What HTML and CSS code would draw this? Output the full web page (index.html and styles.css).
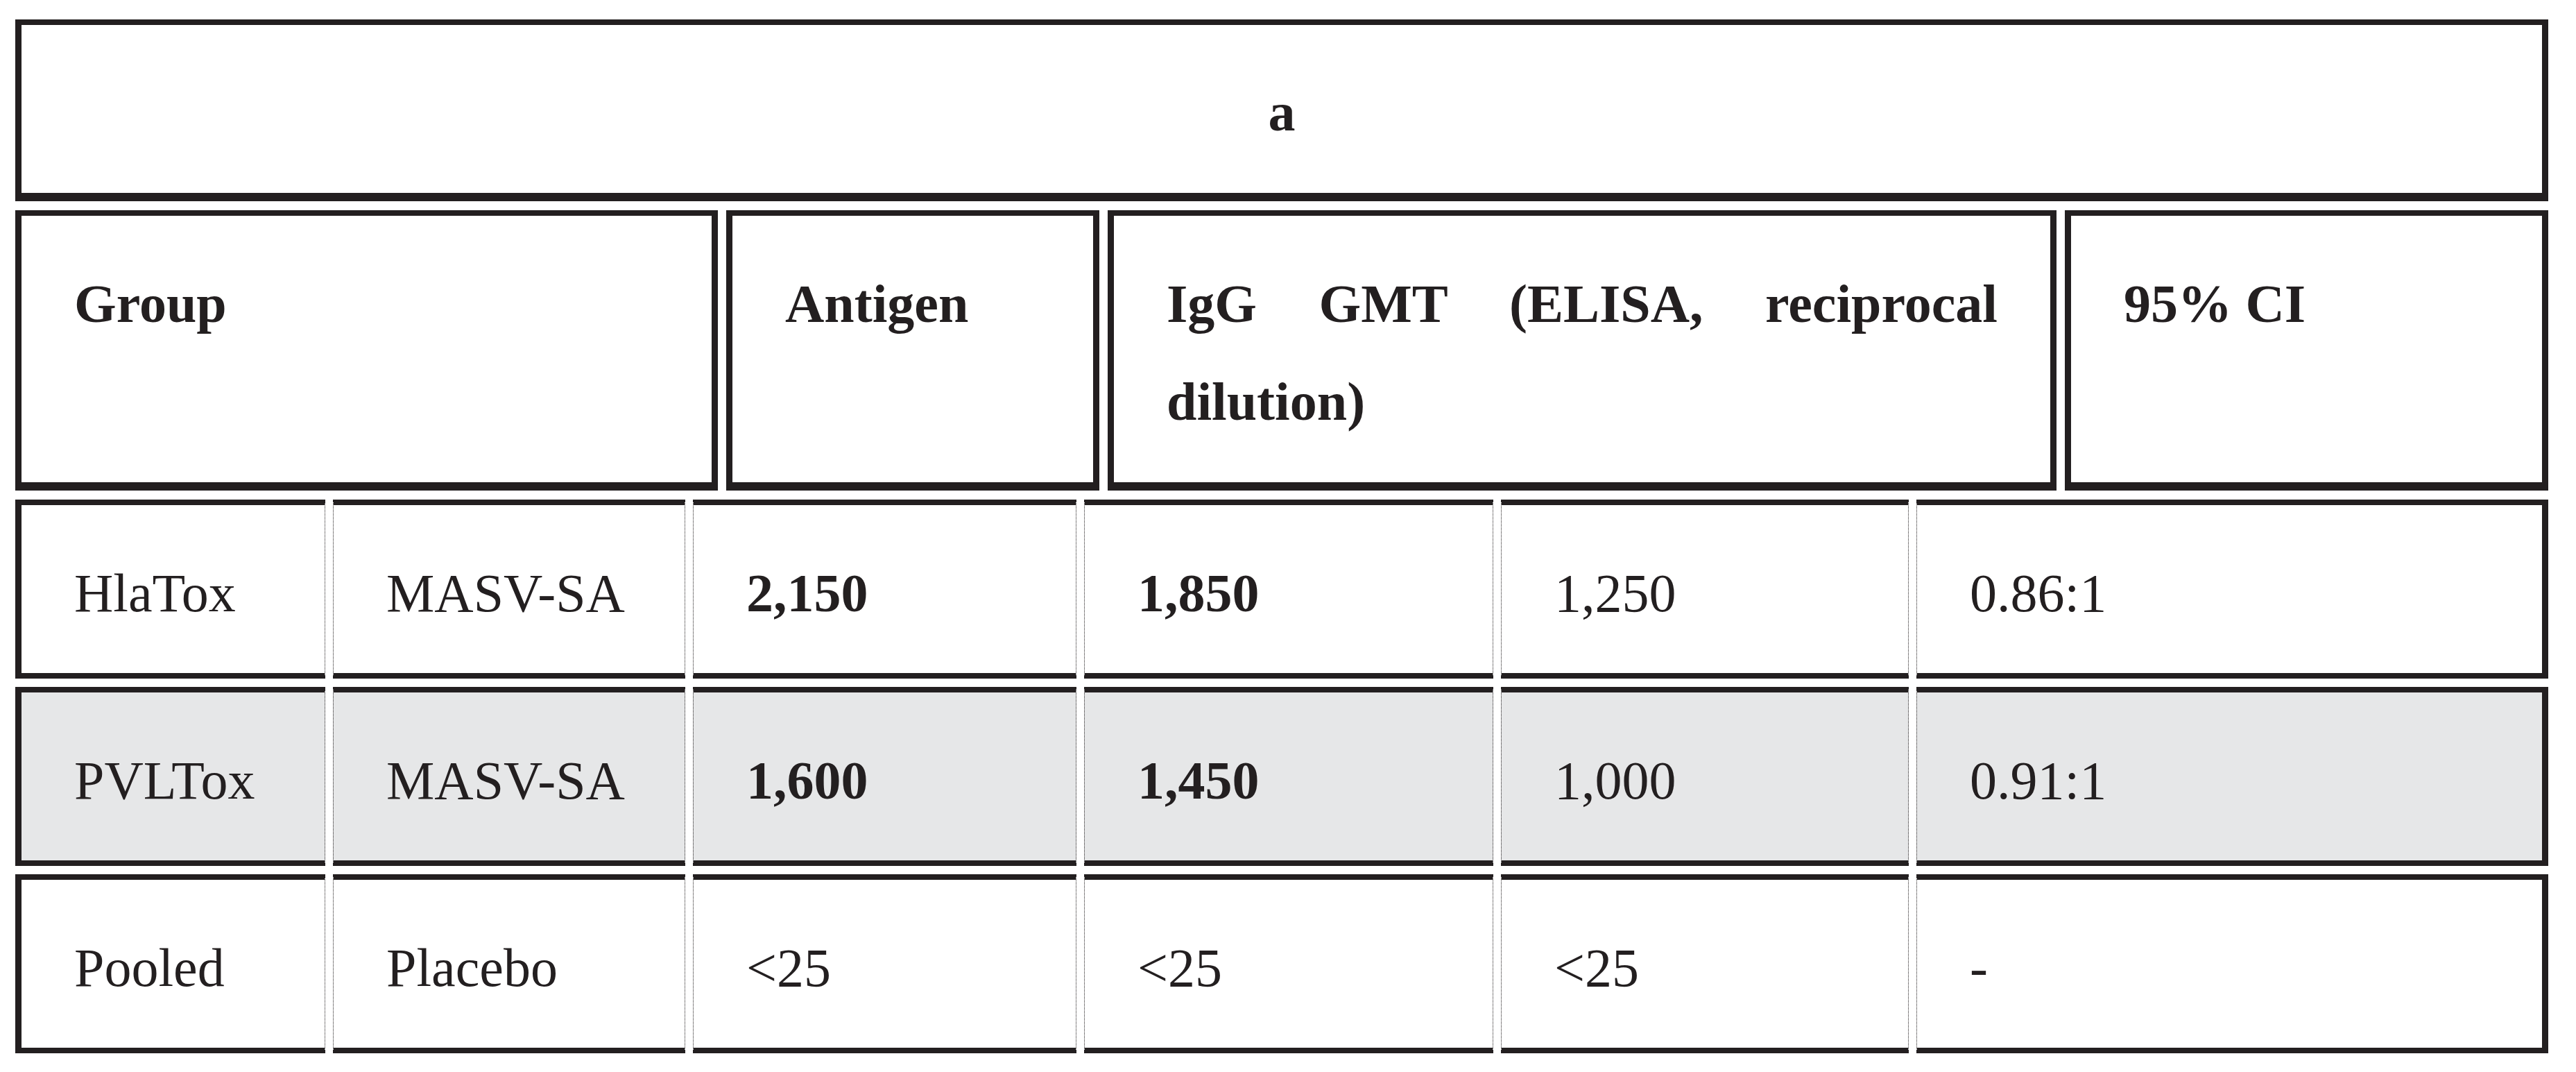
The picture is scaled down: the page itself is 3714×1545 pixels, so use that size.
FILE: index.html
```html
<!DOCTYPE html>
<html lang="en">
<head>
<meta charset="utf-8">
<title>Table a</title>
<link rel="stylesheet" href="styles.css">
</head>
<body>
<div class="page">
  <div class="title-box"><span class="title">a</span></div>
  <div class="header-row">
    <div class="hcell">Group</div>
    <div class="hcell">Antigen</div>
    <div class="hcell">IgG GMT (ELISA, reciprocal dilution)</div>
    <div class="hcell">95% CI</div>
  </div>
  <div class="data-rows">
    <div class="drow">
      <div class="dcell">HlaTox</div>
      <div class="dcell">MASV-SA</div>
      <div class="dcell bold">2,150</div>
      <div class="dcell bold">1,850</div>
      <div class="dcell">1,250</div>
      <div class="dcell">0.86:1</div>
    </div>
    <div class="drow shaded">
      <div class="dcell">PVLTox</div>
      <div class="dcell">MASV-SA</div>
      <div class="dcell bold">1,600</div>
      <div class="dcell bold">1,450</div>
      <div class="dcell">1,000</div>
      <div class="dcell">0.91:1</div>
    </div>
    <div class="drow">
      <div class="dcell">Pooled</div>
      <div class="dcell">Placebo</div>
      <div class="dcell">&lt;25</div>
      <div class="dcell">&lt;25</div>
      <div class="dcell">&lt;25</div>
      <div class="dcell">-</div>
    </div>
  </div>
</div>
</body>
</html>
```
FILE: styles.css
```css
* { box-sizing: border-box; }
html, body {
  margin: 0;
  padding: 0;
  background: #ffffff;
}
body {
  font-family: "Liberation Serif", "Times New Roman", serif;
  color: #231f20;
  font-size: 78px;
}
.page {
  width: 3714px;
  padding: 28px 0 0 22px;
  display: flex;
  flex-direction: column;
  gap: 13px;
}
.title-box {
  width: 3652px;
  height: 262px;
  border: 9px solid #231f20;
  border-top-width: 8px;
  border-bottom-width: 12px;
  display: flex;
  align-items: center;
  justify-content: center;
  padding-top: 10px;
}
.title {
  font-weight: bold;
  line-height: normal;
}
.header-row {
  display: grid;
  grid-template-columns: 1013px 538px 1368px 697px;
  column-gap: 12px;
  height: 404px;
}
.hcell {
  border: 9px solid #231f20;
  border-top-width: 8px;
  border-bottom-width: 12px;
  padding: 56px 76px 0 76px;
  font-weight: bold;
  line-height: 141px;
  text-align: justify;
}
.data-rows {
  display: flex;
  flex-direction: column;
  gap: 12px;
}
.drow {
  display: grid;
  grid-template-columns: 447px 508px 553px 590px 588px 911px;
  column-gap: 11px;
  height: 258px;
}
.dcell {
  border-top: 8px solid #231f20;
  border-bottom: 8px solid #231f20;
  border-left: 1px dotted #231f20;
  border-right: 1px dotted #231f20;
  display: flex;
  align-items: center;
  padding: 12px 0 0 76px;
  line-height: normal;
  background: #ffffff;
}
.dcell:first-child {
  border-left: 9px solid #231f20;
}
.dcell:last-child {
  border-right: 9px solid #231f20;
}
.shaded .dcell {
  background: #e6e7e8;
}
.bold {
  font-weight: bold;
}
```
